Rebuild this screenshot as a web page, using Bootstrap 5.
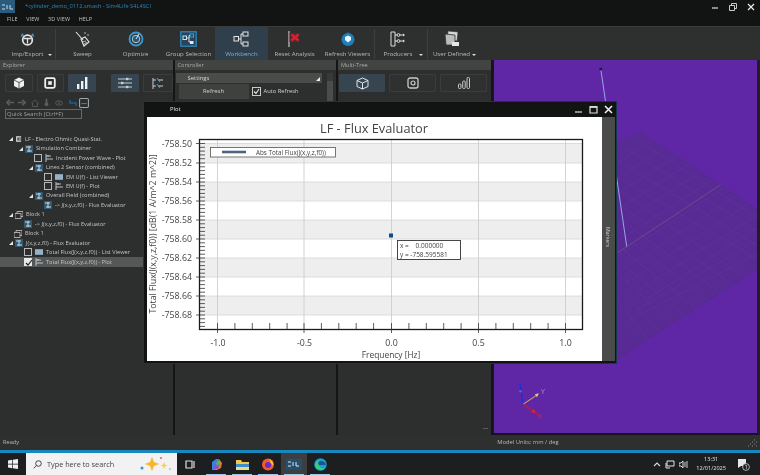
<!DOCTYPE html>
<html lang="en">
<head>
<meta charset="utf-8">
<title>Sim4Life</title>
<link href="https://cdn.jsdelivr.net/npm/bootstrap@5.3.0/dist/css/bootstrap.min.css" rel="stylesheet">
<style>
html,body{height:475px;width:760px;overflow:hidden;margin:0}
html{background:#2d2f2e}
body{background:#2d2f2e;color:#d6d6d6;font-family:"Open Sans","Liberation Sans",sans-serif;font-size:6.3px;line-height:1.2;position:relative;filter:blur(.35px)}
svg{display:block;flex:none}
.title-strip{height:13px;background:#121413;color:#2a86bb;font-size:5.7px}
.logo-tile{width:15px;height:13px;background:#2a5a7c;margin-right:10px}
.win-ctl{width:18px;text-align:center}
.menu-strip{height:13px;background:#121413;padding-left:7px;gap:8.5px;font-size:5.4px;color:#c0c0c0;letter-spacing:.15px}
.tool-strip{height:34px;background:#2e302f;border-top:1px solid #3a3c3b;position:relative}
.tool-btn{height:33px;width:53px;padding:0 0 2.5px;border:0;border-radius:0;color:#b8b8b8;font-size:6.1px;line-height:1.2;position:relative}
.tool-btn:hover{color:#b8b8b8}
.tool-btn.on{background:#2f3f4b;color:#7fb2d3}
.tool-btn.on:hover{background:#2f3f4b;color:#7fb2d3}
.tool-lab{margin-top:3px;white-space:nowrap}
.tool-sep{width:1px;height:30px;background:#3e403f;margin-top:2px}
.drop-arr{position:absolute;top:26.500px;width:0;height:0;border-left:2.500px solid transparent;border-right:2.500px solid transparent;border-top:2.500px solid #ddd}
.tb-imp{width:55px}.tb-pro{width:52px;padding-right:6px}.tb-usr{width:53px;padding-right:6px}
.work-area{height:375px}
.pane{background:#2d2f2e;border-right:2px solid #141514;position:relative;overflow:hidden}
.pane-ex{width:174.500px}.pane-ct{width:163.500px}.pane-mt{width:154.500px}
.pane-head{height:10px;background:#424442;color:#a9a9a9;font-size:5.600px;line-height:10px;padding:0 3px}
.pane-btn{height:18px;padding:0;border:1px solid #3b3d3c;border-radius:1px;background:#2f3130;display:flex;align-items:center;justify-content:center}
.pane-btn.on{background:#36454f;border-color:#36454f}
.pane-btn:hover{background:#2f3130;border-color:#3b3d3c}
.pane-btn.on:hover{background:#36454f;border-color:#36454f}
.small-tools{height:13px;padding-left:6px;margin-top:4px}
.st-a{margin-right:4px}.st-b{margin-right:5px}.st-c{margin-right:6px}.st-d{margin-right:2px}
.search-box{height:10px;margin:0 30px 0 5px;padding:0 1px;width:auto;border:1px solid #666867;border-radius:0;background:#2d2f2e;color:#9a9a9a;font-size:5.800px;line-height:8px;min-height:0}
.search-box::placeholder{color:#a0a0a0}
.tree-list{margin-top:15.500px;font-size:5.620px;color:#c4c4c4}
.tree-row{height:9.450px;white-space:nowrap;margin-right:30px;padding-left:3px}
.tree-row.sel{background:#565857}
.tw{width:8px;display:flex;justify-content:center}
.tw i{display:block;width:0;height:0;border-bottom:4px solid #e4e4e4;border-left:4px solid transparent}
.tb{width:8px;height:8px;border:1px solid #b8b8b8;margin-right:3px;flex:none}
.tb.chk{background:#e8e8e8;border-color:#e8e8e8;display:flex}
.tk{margin-right:3px}
.i1{margin-left:4px}.i2{margin-left:14px}.i3{margin-left:21px}.i4{margin-left:24px}.i5{margin-left:31px}.i6{margin-left:41px}.i7{margin-left:18px}
.set-bar{height:10px;margin:3px 14px 0 1px;background:#4a4c4a;color:#d6d6d6;padding-left:12px;line-height:10px;font-size:5.900px;position:relative}
.set-bar i{position:absolute;right:2px;bottom:2px;width:0;height:0;border-bottom:4px solid #eee;border-left:4px solid transparent}
.refresh-btn{width:70px;height:15px;margin:1px 0 0 4px;padding:0;border:0;border-radius:0;background:#3f413f;color:#d0d0d0;font-size:5.900px;line-height:15px}
.refresh-btn:hover{background:#3f413f;color:#d0d0d0}
.auto-lab{margin-left:3px;color:#d0d0d0;gap:3px;font-size:5.800px}
.chk-box{width:9px;height:9px;border:1px solid #c9c9c9;background:#2d2f2e;display:flex}
.scroll-rail{position:absolute;right:3px;top:13px;width:6px;height:60px;background:#373938}
.scroll-rail b{display:block;margin-top:8px;height:40px;background:#4b4d4b}
.view-port{flex:1;background:#5f27a6;position:relative;border-left:1px solid #1b1522;border-right:3px solid #221c2a;border-bottom:2px solid #17131e;overflow:hidden}
.view-art{position:absolute;inset:0}
.status-strip{height:15px;background:#2e302f;color:#b8b8b8;font-size:5.700px;padding:0 3px}
.status-mod{margin-left:478px;font-size:5.800px}
.blue-line{height:3px;background:#1787bd}
.task-strip{height:22px;background:#1c1e20;color:#eee;position:relative}
.start-cell{width:26px;height:22px}
.search-cell{width:151px;height:22px;background:#f1f2f1;color:#444;font-size:7.300px;padding-left:7px}
.search-cell svg.spark{margin-left:auto;margin-right:5px}
.srch-lab{margin-left:5px}
.task-ico{width:26px;height:22px;position:relative;justify-content:center}
.task-ico.act{background:#3c3e40}
.task-ico.run::after{content:"";position:absolute;bottom:0;left:3px;right:3px;height:1.500px;background:#9cc9e6}
.tray{margin-left:auto;gap:4px;padding-right:10px}
.clock-cell{font-size:5.600px;line-height:9px;text-align:center;color:#e0e0e0;margin:0 7px 0 4px}
.plot-win{position:absolute;left:143px;top:101px;width:474px;height:263px;background:#121413;border:1px solid #17384a}
.plot-title{height:15px;color:#e0e0e0;font-size:5.900px;padding-left:26px}
.plot-ctl{margin-left:auto;gap:6px;padding-right:3px}
.plot-body{padding-left:3px}
.markers-bar{width:13px;height:244px;background:#4a4c49;color:#d4d4d4;font-size:5.200px;position:relative}
.markers-bar span{position:absolute;left:3px;top:110px;writing-mode:vertical-rl}
.chart-svg text{font-family:"Open Sans","Liberation Sans",sans-serif;fill:#444}
</style>
</head>
<body class="d-flex flex-column">
<svg width="0" height="0" style="position:absolute">
<defs>
<symbol id="ic-plot" viewBox="0 0 8 8"><path d="M1 0v8M1 2h5M3 1v2M1 5h7" fill="none" stroke="#b8c4cc" stroke-width="1"/></symbol>
<symbol id="ic-list" viewBox="0 0 8 8"><rect x="0" y="1" width="8" height="6" fill="#7f9cb4"/><path d="M0 3h8M0 5h8" stroke="#d6e2ea" stroke-width=".6"/></symbol>
<symbol id="ic-sim" viewBox="0 0 8 8"><rect x="0" y="0" width="8" height="8" fill="#33586f"/><path d="M1 2h5M4 1v6M2 6h5" stroke="#c6d8e4" stroke-width="1"/></symbol>
<symbol id="ic-blk" viewBox="0 0 8 8"><path d="M0 2.500h6v5H0zM2 2.500V.5h6v5H6" fill="none" stroke="#c8c8c8" stroke-width=".8"/></symbol>
<symbol id="ic-lf" viewBox="0 0 8 8"><path d="M7 1.500H2v5h5M4 4h3" fill="none" stroke="#e4e4e4" stroke-width="1.400"/></symbol>
</defs>
</svg>

<div class="title-strip d-flex align-items-center">
  <div class="logo-tile d-flex align-items-center justify-content-center">
    <svg width="13" height="8" viewBox="0 0 13 8"><path d="M1 2h3M1 6h3M6 2v4M9 2v4h3" stroke="#c9dbe7" stroke-width="1" fill="none"/></svg>
  </div>
  <span class="flex-grow-1">*cylinder_demo_0112.smash - Sim4Life S4L4SCI</span>
  <div class="win-ctl"><svg class="mx-auto" width="8" height="8" viewBox="0 0 8 8"><path d="M1 5h6" stroke="#ddd" stroke-width="1.200"/></svg></div>
  <div class="win-ctl"><svg class="mx-auto" width="8" height="8" viewBox="0 0 8 8"><path d="M.5 2.500h5v5h-5zM2.500 2.500V.5h5v5h-2" fill="none" stroke="#ddd" stroke-width=".9"/></svg></div>
  <div class="win-ctl"><svg class="mx-auto" width="8" height="8" viewBox="0 0 8 8"><path d="M1 1l6 6M7 1L1 7" stroke="#eee" stroke-width="1.200"/></svg></div>
</div>
<div class="menu-strip d-flex align-items-center"><span>FILE</span><span>VIEW</span><span>3D VIEW</span><span>HELP</span></div>

<div class="tool-strip d-flex">
  <button class="btn tool-btn tb-imp d-flex flex-column align-items-center justify-content-end" type="button">
    <svg width="17" height="16" viewBox="0 0 17 16"><circle cx="8.500" cy="9" r="4.800" fill="none" stroke="#e2e2e2" stroke-width="1.800"/><path d="M5 7.500h7M8.500 7.500v5" stroke="#e2e2e2" stroke-width="1.300"/><path d="M1.500 6l1.500-4 2.500 2.500zM15.500 6L14 2l-2.500 2.500z" fill="#3d8fd0"/></svg>
    <span class="tool-lab">Imp/Export</span></button>
  <span class="drop-arr" style="left:48px"></span>
  <div class="tool-sep"></div>
  <button class="btn tool-btn d-flex flex-column align-items-center justify-content-end" type="button">
    <svg width="17" height="16" viewBox="0 0 17 16"><path d="M2 1l7 8" stroke="#e6e6e6" stroke-width="1.100"/><path d="M7 8l4-2 4 5-5 4z" fill="none" stroke="#e6e6e6" stroke-width="1.100"/><path d="M8 11l4-1M10 13l3-2" stroke="#e6e6e6" stroke-width=".7"/><circle cx="11" cy="2" r=".7" fill="#e6e6e6"/><circle cx="14" cy="4" r=".7" fill="#e6e6e6"/></svg>
    <span class="tool-lab">Sweep</span></button>
  <button class="btn tool-btn d-flex flex-column align-items-center justify-content-end" type="button">
    <svg width="16" height="16" viewBox="0 0 16 16"><circle cx="8" cy="8" r="6.500" fill="none" stroke="#3a9ad2" stroke-width="1.800"/><circle cx="8" cy="8" r="3.800" fill="#245a80" stroke="#dfe8ee" stroke-width=".8"/><path d="M8 8l3-5" stroke="#dfe8ee" stroke-width="1"/></svg>
    <span class="tool-lab">Optimize</span></button>
  <button class="btn tool-btn d-flex flex-column align-items-center justify-content-end" type="button">
    <svg width="17" height="16" viewBox="0 0 17 16"><rect x=".8" y=".8" width="15.400" height="14.400" fill="#27445a" stroke="#2f8dc6" stroke-width="1.200"/><rect x="3" y="5" width="3.500" height="3.500" fill="none" stroke="#cfe0ea"/><rect x="10" y="3" width="3.500" height="3" fill="none" stroke="#3fa0da"/><rect x="10" y="10" width="3.500" height="3" fill="#e8e8e8"/><path d="M6.500 7H9V4.500h1M9 7v4h1" fill="none" stroke="#cfe0ea"/></svg>
    <span class="tool-lab">Group Selection</span></button>
  <button class="btn tool-btn on d-flex flex-column align-items-center justify-content-end" type="button">
    <svg width="17" height="16" viewBox="0 0 17 16"><rect x="1" y="5.500" width="4.500" height="4.500" fill="none" stroke="#e4e4e4"/><rect x="10" y="1" width="5" height="4" fill="none" stroke="#e4e4e4"/><rect x="10" y="11" width="5" height="4" fill="none" stroke="#e4e4e4"/><path d="M5.500 8H8M8 3h2M8 13h2M8 3v10" fill="none" stroke="#e4e4e4"/></svg>
    <span class="tool-lab">Workbench</span></button>
  <button class="btn tool-btn d-flex flex-column align-items-center justify-content-end" type="button">
    <svg width="17" height="16" viewBox="0 0 17 16"><path d="M3 0v16" stroke="#e4e4e4" stroke-width="1"/><path d="M3.500 2h11l-2 4 2 5h-11z" fill="#5b2530"/><path d="M5.500 3.500l7 6M12.500 3.500l-7 6" stroke="#d8232f" stroke-width="2.400"/></svg>
    <span class="tool-lab">Reset Analysis</span></button>
  <button class="btn tool-btn d-flex flex-column align-items-center justify-content-end" type="button">
    <svg width="16" height="16" viewBox="0 0 16 16"><circle cx="8" cy="8.500" r="6.500" fill="#1d7fbd"/><path d="M8 1l2 3H6z" fill="#1d7fbd"/><path d="M5 6l3-1.500L11 6v3L8 11.500 5 9z" fill="#eef4f8"/></svg>
    <span class="tool-lab">Refresh Viewers</span></button>
  <div class="tool-sep"></div>
  <button class="btn tool-btn tb-pro d-flex flex-column align-items-center justify-content-end" type="button">
    <svg width="16" height="16" viewBox="0 0 16 16"><path d="M5 1H1v14h4V1" fill="none" stroke="#dcdcdc"/><path d="M5 4h2M5 10h2M10 4h4M10 10h4" stroke="#dcdcdc"/><circle cx="8.500" cy="4" r="1.400" fill="none" stroke="#dcdcdc"/><circle cx="8.500" cy="10" r="1.400" fill="none" stroke="#dcdcdc"/><path d="M13 2.500l2 1.500-2 1.500zM13 8.500l2 1.500-2 1.500z" fill="#dcdcdc"/></svg>
    <span class="tool-lab">Producers</span></button>
  <span class="drop-arr" style="left:419px"></span>
  <div class="tool-sep"></div>
  <button class="btn tool-btn tb-usr d-flex flex-column align-items-center justify-content-end" type="button">
    <svg width="17" height="17" viewBox="0 0 17 17"><path d="M5 1l10 1-1 9-10-1z" fill="#d8d8d8" stroke="#2e302f" stroke-width=".6"/><path d="M2 4l10 1v10H3z" fill="#bcbcbc" stroke="#2e302f" stroke-width=".8"/><path d="M9 12h7v4H9z" fill="#e6e6e6"/></svg>
    <span class="tool-lab">User Defined</span></button>
  <span class="drop-arr" style="left:472px"></span>
</div>

<div class="work-area d-flex">
  <section class="pane pane-ex">
    <div class="pane-head">Explorer</div>
    <div class="d-flex mt-1" style="padding-left:5px">
      <button class="btn pane-btn" style="width:28px" type="button"><svg width="12" height="12" viewBox="0 0 12 12"><path d="M6 .5l5 2.500v6L6 11.500 1 9V3z" fill="#efefef"/><path d="M1 3l5 2.500L11 3M6 5.500v6" stroke="#323433" stroke-width=".8" fill="none"/></svg></button>
      <button class="btn pane-btn ms-1" style="width:27px" type="button"><svg width="12" height="12" viewBox="0 0 12 12"><rect x="1.200" y="1.200" width="9.600" height="9.600" rx="1.500" fill="none" stroke="#efefef" stroke-width="1.800"/><rect x="4.200" y="4.200" width="3.600" height="3.600" fill="#efefef"/></svg></button>
      <button class="btn pane-btn on ms-1" style="width:28px" type="button"><svg width="12" height="12" viewBox="0 0 12 12"><path d="M1 7h2.400v5H1zM5 4h2.400v8H5zM9 0h2.400v12H9z" fill="#f2f2f2"/></svg></button>
      <button class="btn pane-btn on" style="width:28px;margin-left:15px" type="button"><svg width="14" height="12" viewBox="0 0 14 12"><path d="M0 2h14M0 6h14M0 10h14" stroke="#c5ced4"/><rect x="8" y=".8" width="2.400" height="2.400" fill="#c5ced4"/><rect x="3" y="4.800" width="2.400" height="2.400" fill="#c5ced4"/><rect x="8" y="8.800" width="2.400" height="2.400" fill="#c5ced4"/></svg></button>
      <button class="btn pane-btn ms-1" style="width:30px" type="button"><svg width="13" height="13" viewBox="0 0 13 13"><path d="M2 1v11M2 3h3M2 9h3M7 3l5 0M7 9l5 0" stroke="#c5ced4" fill="none"/><path d="M6 1l3 4M6 7l3 4" stroke="#5d9bc4" fill="none"/></svg></button>
    </div>
    <div class="small-tools d-flex align-items-center">
      <svg class="st-a" width="8" height="7" viewBox="0 0 9 7"><path d="M9 3.500H3M4 .5L1 3.500l3 3" fill="none" stroke="#5d5f5e" stroke-width="1.800"/></svg>
      <svg class="st-b" width="8" height="7" viewBox="0 0 9 7"><path d="M0 3.500h6M5 .5l3 3-3 3" fill="none" stroke="#5d5f5e" stroke-width="1.800"/></svg>
      <svg class="st-b" width="8" height="8" viewBox="0 0 8 8"><path d="M.5 4L4 1l3.500 3M1.500 4v3.500h5V4" fill="none" stroke="#525453"/></svg>
      <svg class="st-c" width="5" height="9" viewBox="0 0 6 9"><path d="M3 0v5" stroke="#5d5f5e" stroke-width="2"/><circle cx="3" cy="6.500" r="2.200" fill="#5d5f5e"/></svg>
      <svg class="st-c" width="8" height="6" viewBox="0 0 9 7"><ellipse cx="4.500" cy="3.500" rx="4" ry="2.500" fill="none" stroke="#5d5f5e"/><circle cx="4.500" cy="3.500" r="1" fill="#5d5f5e"/></svg>
      <svg class="st-d" width="8" height="8" viewBox="0 0 8 8"><path d="M1 1v3h6v3" fill="none" stroke="#1d5f8c" stroke-width="1.500"/></svg>
      <svg width="10" height="10" viewBox="0 0 9 9"><rect x=".5" y=".5" width="8" height="8" rx="1" fill="none" stroke="#9aa6ae"/><path d="M2 5h5" stroke="#3d7aa4"/></svg>
    </div>
    <input class="form-control search-box" type="text" placeholder="Quick Search (Ctrl+F)">
    <div class="tree-list">
      <div class="tree-row d-flex align-items-center"><span class="tw i1"><i></i></span><svg class="tk" width="7" height="8"><use href="#ic-lf"/></svg><span>LF - Electro Ohmic Quasi-Stat.</span></div>
      <div class="tree-row d-flex align-items-center"><span class="tw i2"><i></i></span><svg class="tk" width="8" height="8"><use href="#ic-sim"/></svg><span>Simulation Combiner</span></div>
      <div class="tree-row d-flex align-items-center"><span class="tb i5"></span><svg class="tk" width="8" height="8"><use href="#ic-plot"/></svg><span>Incident Power Wave - Plot</span></div>
      <div class="tree-row d-flex align-items-center"><span class="tw i4"><i></i></span><svg class="tk" width="8" height="8"><use href="#ic-sim"/></svg><span>Lines 2 Sensor (combined)</span></div>
      <div class="tree-row d-flex align-items-center"><span class="tb i6"></span><svg class="tk" width="8" height="8"><use href="#ic-list"/></svg><span>EM U(f) - List Viewer</span></div>
      <div class="tree-row d-flex align-items-center"><span class="tb i6"></span><svg class="tk" width="8" height="8"><use href="#ic-plot"/></svg><span>EM U(f) - Plot</span></div>
      <div class="tree-row d-flex align-items-center"><span class="tw i4"><i></i></span><svg class="tk" width="8" height="8"><use href="#ic-sim"/></svg><span>Overall Field (combined)</span></div>
      <div class="tree-row d-flex align-items-center"><span class="i6"></span><svg class="tk" width="8" height="8"><use href="#ic-sim"/></svg><span>-&gt; J(x,y,z,f0) - Flux Evaluator</span></div>
      <div class="tree-row d-flex align-items-center"><span class="tw i1"><i></i></span><svg class="tk" width="8" height="8"><use href="#ic-blk"/></svg><span>Block 1</span></div>
      <div class="tree-row d-flex align-items-center"><span class="i3"></span><svg class="tk" width="8" height="8"><use href="#ic-sim"/></svg><span>-&gt; J(x,y,z,f0) - Flux Evaluator</span></div>
      <div class="tree-row d-flex align-items-center"><span class="i7"></span><svg class="tk" width="8" height="8" style="margin-left:-7px"><use href="#ic-blk"/></svg><span>Block 1</span></div>
      <div class="tree-row d-flex align-items-center"><span class="tw i1"><i></i></span><svg class="tk" width="8" height="8"><use href="#ic-sim"/></svg><span>J(x,y,z,f0) - Flux Evaluator</span></div>
      <div class="tree-row d-flex align-items-center"><span class="tb i3"></span><svg class="tk" width="8" height="8"><use href="#ic-list"/></svg><span>Total Flux(J(x,y,z,f0)) - List Viewer</span></div>
      <div class="tree-row sel d-flex align-items-center"><span class="tb chk i3"><svg width="8" height="8" viewBox="0 0 8 8"><path d="M1 4l2 2 4-5" fill="none" stroke="#222" stroke-width="1.200"/></svg></span><svg class="tk" width="8" height="8"><use href="#ic-plot"/></svg><span>Total Flux(J(x,y,z,f0)) - Plot</span></div>
    </div>
  </section>

  <section class="pane pane-ct">
    <div class="pane-head">Controller</div>
    <div class="set-bar">Settings<i></i></div>
    <div class="d-flex align-items-center">
      <button class="btn refresh-btn" type="button">Refresh</button>
      <label class="auto-lab d-flex align-items-center"><span class="chk-box"><svg width="7" height="7" viewBox="0 0 7 7"><path d="M1 3.500l2 2 3-4.500" fill="none" stroke="#eee" stroke-width="1.100"/></svg></span>Auto Refresh</label>
    </div>
    <div class="scroll-rail"><b></b></div>
  </section>

  <section class="pane pane-mt">
    <div class="pane-head">Multi-Tree</div>
    <div class="d-flex mt-1 gap-1" style="padding-left:1px">
      <button class="btn pane-btn on" style="width:46px" type="button"><svg width="13" height="13" viewBox="0 0 13 13"><path d="M6.500 1L12 3.500v6L6.500 12 1 9.500v-6zM1 3.500l5.500 2.500L12 3.500M6.500 6v6" fill="none" stroke="#dfe5e9"/></svg></button>
      <button class="btn pane-btn" style="width:47px" type="button"><svg width="12" height="12" viewBox="0 0 12 12"><rect x="1" y="1" width="10" height="10" rx="2" fill="none" stroke="#c9c9c9" stroke-width="1.300"/><circle cx="6" cy="6" r="2" fill="none" stroke="#c9c9c9" stroke-width="1.200"/></svg></button>
      <button class="btn pane-btn" style="width:47px" type="button"><svg width="12" height="12" viewBox="0 0 12 12"><rect x=".5" y="7" width="2.500" height="4.500" rx="1" fill="none" stroke="#c9c9c9"/><rect x="4.700" y="4" width="2.500" height="7.500" rx="1" fill="none" stroke="#c9c9c9"/><rect x="9" y=".5" width="2.500" height="11" rx="1" fill="none" stroke="#c9c9c9"/></svg></button>
    </div>
    <svg class="position-absolute" style="left:144px;top:367px" width="7" height="3" viewBox="0 0 7 3"><path d="M1 1.500h5" stroke="#5a5c5b"/></svg>
  </section>

  <section class="view-port">
    <svg class="view-art" viewBox="493 60 264 373" preserveAspectRatio="none">
      <polygon points="640,132 757,209 757,270 617,360 520,290 560,170" fill="#582a94"/>
      <g stroke="#663a9e" stroke-width=".5" fill="none" opacity=".8">
        <path d="M652 140 L530 220M664 148 L540 228M676 156 L552 236M688 164 L564 244M700 172 L576 252M712 180 L588 260M724 188 L600 268M736 196 L612 276M748 204 L624 284M757 215 L636 292M757 228 L646 300M757 241 L636 310M757 254 L626 322"/>
        <path d="M632 137 L757 218M624 148 L757 232M616 160 L757 246M608 172 L757 260M617 190 L745 278M617 204 L733 286M617 218 L721 294M617 232 L709 302M617 246 L697 310M617 260 L685 318M617 274 L673 326M617 288 L661 334M617 302 L649 342"/>
      </g>
      <path d="M617 253 L720 185" stroke="#7d4c86" stroke-width=".8"/>
      <path d="M600 69 L626 247" stroke="#97a4e6" stroke-width="1"/>
      <circle cx="600" cy="69" r="1.600" fill="#2a1a3a"/>
      <g font-family="Open Sans,Liberation Sans,sans-serif" font-size="7">
        <path d="M522 405L519 384" stroke="#1f2bd6" stroke-width="1.300"/><circle cx="519.500" cy="392" r="1.300" fill="#4a62e6"/>
        <path d="M522 405L537 395" stroke="#c9a06a" stroke-width="1.100"/><path d="M534 395l4-1-2 4z" fill="#e6c48a"/>
        <path d="M522 405L540 417" stroke="#b41d3c" stroke-width="1.600"/><circle cx="532.500" cy="412" r="1.800" fill="#d81f45"/>
        <text x="516" y="387" fill="#2b3ad8">Z</text><text x="540" y="395" fill="#d68ab0">Y</text><text x="537" y="420" fill="#b52a70">X</text>
      </g>
    </svg>
  </section>
</div>

<div class="status-strip d-flex align-items-center"><span>Ready</span><span class="status-mod">Model Units: mm / deg</span>
  <svg class="ms-auto" width="10" height="8" viewBox="0 0 10 8"><path d="M1 7h1M3 5h1M5 7h1M5 3h1M7 1h1M7 5h1M9 3h1M9 7h1" stroke="#888"/></svg></div>
<div class="blue-line"></div>

<div class="task-strip d-flex">
  <div class="start-cell d-flex align-items-center justify-content-center"><svg width="10" height="10" viewBox="0 0 10 10"><path d="M0 1.500l4.300-.7v3.900H0zM5 .7L10 0v4.700H5zM0 5.400h4.300v3.900L0 8.600zM5 5.400h5V10l-5-.7z" fill="#f0f0f0"/></svg></div>
  <div class="search-cell d-flex align-items-center">
    <svg width="9" height="9" viewBox="0 0 9 9"><circle cx="5.500" cy="3.500" r="2.800" fill="none" stroke="#444"/><path d="M3.500 5.500L.7 8.300" stroke="#444"/></svg>
    <span class="srch-lab">Type here to search</span>
    <svg class="spark" width="32" height="16" viewBox="0 0 32 16"><path d="M12 1l2 5 5 2-5 2-2 5-2-5-5-2 5-2z" fill="#f6b62a"/><path d="M24 6l1 2.500 2.500 1-2.500 1-1 2.500-1-2.500-2.500-1 2.500-1z" fill="#f6d15a"/><circle cx="2" cy="12" r="1.500" fill="#2f8fd8"/><circle cx="21" cy="2" r="1" fill="#e05a70"/><circle cx="30" cy="13" r="1" fill="#bbb"/></svg>
  </div>
  <div class="task-ico d-flex align-items-center"><svg width="10" height="9" viewBox="0 0 10 9"><path d="M1 1h6v7H1zM9 1v7" fill="none" stroke="#ddd" stroke-width="1.200"/></svg></div>
  <div class="task-ico run d-flex align-items-center"><svg width="13" height="13" viewBox="0 0 13 13"><path d="M2 4l4-3h3l-2 5-3 6H2z" fill="#3c7fe0"/><path d="M9 1l3 4-1 5-4 2-3 0 3-6z" fill="#e87a2a"/><path d="M5 6h5l-2 5H4z" fill="#8c4ed0"/><path d="M6 5l3-3 1 4-3 2z" fill="#46b96a"/></svg></div>
  <div class="task-ico run d-flex align-items-center"><svg width="13" height="11" viewBox="0 0 13 11"><path d="M0 1h5l1 2h7v8H0z" fill="#f2c94c"/><path d="M0 5h13v3H0z" fill="#3c8dc8"/><path d="M0 8h13v3H0z" fill="#ecd98a"/></svg></div>
  <div class="task-ico run d-flex align-items-center"><svg width="14" height="14" viewBox="0 0 14 14"><circle cx="7" cy="7.500" r="6" fill="#f25c2a"/><path d="M7 2c3 0 6 3 5 7-1-2-2-3-3-3 1-2 0-3-2-4z" fill="#ffc02e"/><circle cx="7" cy="8" r="3" fill="#6a2ad0"/></svg></div>
  <div class="task-ico act run d-flex align-items-center"><svg width="16" height="11" viewBox="0 0 16 11"><rect width="16" height="11" fill="#24506e"/><path d="M2 3h3M2 7h3M7 3v4M10 3v4h3" stroke="#dbe7ef" fill="none"/></svg></div>
  <div class="task-ico run d-flex align-items-center"><svg width="13" height="13" viewBox="0 0 13 13"><circle cx="6.500" cy="6.500" r="6.200" fill="#1aa0d8"/><path d="M1 8c0-4 3-6 6-5 3 0 5 2 5 4H5c0 3 4 4 6 3-2 3-8 3-10-2z" fill="#37d07a"/><path d="M5 7h7c0-2-2-4-5-4-2 0-4 2-2 4z" fill="#17568f"/></svg></div>
  <div class="tray d-flex align-items-center">
    <svg width="8" height="6" viewBox="0 0 8 6"><path d="M1 5l3-3 3 3" fill="none" stroke="#ddd" stroke-width="1.100"/></svg>
    <svg width="10" height="9" viewBox="0 0 10 9"><path d="M2 1h7v5H2zM1 3v5h4" fill="none" stroke="#e4e4e4"/></svg>
    <svg width="9" height="9" viewBox="0 0 9 9"><path d="M0 3h2l2-2v7L2 6H0z" fill="none" stroke="#ddd"/><path d="M6 2v5M8 1v7" stroke="#ccc"/></svg>
    <div class="clock-cell">13:31<br>12/01/2025</div>
    <svg width="13" height="13" viewBox="0 0 13 13"><path d="M1 1h8v7H4L1 10z" fill="#e8e8e8"/><circle cx="9" cy="9" r="3.400" fill="#1c1e20" stroke="#e8e8e8" stroke-width=".7"/><text x="9" y="11" font-size="5.500" text-anchor="middle" fill="#eee" font-family="Open Sans,sans-serif">1</text></svg>
  </div>
</div>

<div class="plot-win d-flex flex-column">
  <div class="plot-title d-flex align-items-center"><span>Plot</span>
    <div class="plot-ctl d-flex align-items-center">
      <svg width="9" height="9" viewBox="0 0 9 9"><path d="M1 7h7" stroke="#ddd" stroke-width="1.200"/></svg>
      <svg width="9" height="9" viewBox="0 0 9 9"><path d="M1 1.500h7v6.500H1z" fill="none" stroke="#ddd" stroke-width="1.200"/><path d="M1 2h7" stroke="#ddd" stroke-width="1.800"/></svg>
      <svg width="9" height="9" viewBox="0 0 9 9"><path d="M1 1l7 7M8 1L1 8" stroke="#f2f2f2" stroke-width="1.500"/></svg>
    </div>
  </div>
  <div class="plot-body d-flex">
    <svg class="chart-svg" width="455" height="244" viewBox="147 117 455 244">
      <rect x="147" y="117" width="455" height="244" fill="#fff"/>
      <g fill="#eeeeee"><rect x="200" y="143" width="382" height="20"/><rect x="200" y="182" width="382" height="19"/><rect x="200" y="220" width="382" height="19"/><rect x="200" y="258" width="382" height="19"/><rect x="200" y="296" width="382" height="19"/></g>
      <g stroke="#d5d5d5" stroke-width=".8"><path d="M200 143.500h382M200 163h382M200 182h382M200 201h382M200 220h382M200 239h382M200 258h382M200 277h382M200 296h382M200 315h382"/>
      <path d="M217.500 140v189M304 140v189M391.500 140v189M478.500 140v189M565.500 140v189" stroke="#c9c9c9"/></g>
      <rect x="199.500" y="139.500" width="383" height="190" fill="none" stroke="#1a1a1a" stroke-width="1.300"/>
      <g stroke="#333" stroke-width=".8"><path d="M196 143.500h9M196 163h9M196 182h9M196 201h9M196 220h9M196 239h9M196 258h9M196 277h9M196 296h9M196 315h9"/>
      <path d="M200 147.300h5M200 151.100h5M200 154.900h5M200 158.700h5M200 166.800h5M200 170.600h5M200 174.400h5M200 178.200h5M200 185.800h5M200 189.600h5M200 193.400h5M200 197.200h5M200 204.800h5M200 208.600h5M200 212.400h5M200 216.200h5M200 223.800h5M200 227.600h5M200 231.400h5M200 235.200h5M200 242.800h5M200 246.600h5M200 250.400h5M200 254.200h5M200 261.800h5M200 265.600h5M200 269.400h5M200 273.200h5M200 280.800h5M200 284.600h5M200 288.400h5M200 292.200h5M200 299.800h5M200 303.600h5M200 307.400h5M200 311.200h5M200 318.800h5M200 322.600h5M200 326.400h5"/>
      <path d="M217.500 323v10M304 323v10M391.500 323v10M478.500 323v10M565.500 323v10"/>
      <path d="M234.900 323v6M252.300 323v6M269.700 323v6M287.100 323v6M321.400 323v6M338.800 323v6M356.200 323v6M373.600 323v6M408.900 323v6M426.300 323v6M443.700 323v6M461.100 323v6M495.900 323v6M513.300 323v6M530.700 323v6M548.100 323v6"/></g>
      <text x="320" y="133" font-size="12.800">LF - Flux Evaluator</text>
      <g font-size="8.800" text-anchor="end"><text x="192" y="147">-758.50</text><text x="192" y="166.300">-758.52</text><text x="192" y="185.300">-758.54</text><text x="192" y="204.300">-758.56</text><text x="192" y="223.300">-758.58</text><text x="192" y="242.300">-758.60</text><text x="192" y="261.300">-758.62</text><text x="192" y="280.300">-758.64</text><text x="192" y="299.300">-758.66</text><text x="192" y="318.300">-758.68</text></g>
      <g font-size="8.800" text-anchor="middle"><text x="218" y="346">-1.0</text><text x="304.500" y="346">-0.5</text><text x="391.500" y="346">0.0</text><text x="478.500" y="346">0.5</text><text x="565.500" y="346">1.0</text></g>
      <text x="391" y="357.500" font-size="8.400" text-anchor="middle">Frequency [Hz]</text>
      <text transform="translate(155.500 234) rotate(-90)" font-size="8.800" text-anchor="middle">Total Flux(J(x,y,z,f0)) [dB(1 A/m^2 m^2)]</text>
      <rect x="210.500" y="147.500" width="125" height="9.500" fill="#fff" stroke="#555" stroke-width=".8"/>
      <path d="M222 152h24" stroke="#4d6480" stroke-width="2.600"/>
      <text x="256" y="154.500" font-size="6.300">Abs Total Flux(J(x,y,z,f0))</text>
      <rect x="389" y="233.500" width="4" height="4" fill="#0f4d8a"/>
      <rect x="397.500" y="240.500" width="63" height="19" fill="#fff" stroke="#333" stroke-width=".9"/>
      <text x="400" y="248" font-size="6.500" xml:space="preserve">x =    0.000000</text>
      <text x="400" y="256.500" font-size="6.500">y = -758.595581</text>
    </svg>
    <div class="markers-bar"><span>Markers</span></div>
  </div>
</div>
</body>
</html>
